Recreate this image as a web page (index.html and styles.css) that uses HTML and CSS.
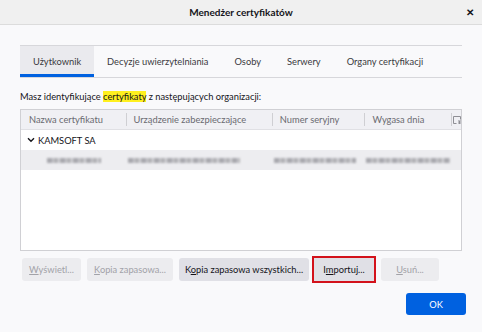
FILE: index.html
```html
<!DOCTYPE html>
<html lang="pl">
<head>
    <meta charset="UTF-8">
    <meta name="viewport" content="width=device-width, initial-scale=1.0">
    <link rel="stylesheet" href="styles.css">
</head>
<body>

    <div class="titlebar">
        <span></span>
        <span class="title">Menedżer certyfikatów</span>
        <span class="close">&#x2715;</span>
    </div>

    <div class="content">
        <div class="tabs">
            <div class="tab active">Użytkownik</div>
            <div class="tab">Decyzje uwierzytelniania</div>
            <div class="tab">Osoby</div>
            <div class="tab">Serwery</div>
            <div class="tab">Organy certyfikacji</div>
        </div>

        <p class="intro">Masz identyfikujące <mark>certyfikaty</mark> z następujących organizacji:</p>

        <div class="cert-table">
            <div class="cert-head">
                <div class="col c1">Nazwa certyfikatu</div>
                <div class="col c2">Urządzenie zabezpieczające</div>
                <div class="col c3">Numer seryjny</div>
                <div class="col c4">Wygasa dnia</div>
                <div class="col c5">
                    <svg width="8" height="8" viewBox="0 0 8 8"><path d="M0.5 0.5h7v3M0.5 0.5v7h3M5 5h3M5 7h3M6.5 5v3" fill="none" stroke="#8f8f95" stroke-width="1"/></svg>
                </div>
            </div>
            <div class="group-row">
                <svg width="8" height="6" viewBox="0 0 8 6"><path d="M1 1.2l3 3 3-3" fill="none" stroke="#15141a" stroke-width="1.4"/></svg>
                KAMSOFT SA
            </div>
            <div class="cert-row">
                <div class="col c1"><span class="blur" style="width:54px"></span></div>
                <div class="col c2"><span class="blur" style="width:112px"></span></div>
                <div class="col c3"><span class="blur" style="width:82px"></span></div>
                <div class="col c4"><span class="blur" style="width:84px"></span></div>
            </div>
        </div>

        <div class="actions">
            <button class="btn w-view" disabled><u>W</u>yświetl...</button>
            <button class="btn w-backup" disabled><u>K</u>opia zapasowa...</button>
            <button class="btn w-backup-all">K<u>o</u>pia zapasowa wszystkich...</button>
            <button class="btn w-import marked">I<u>m</u>portuj...</button>
            <button class="btn w-delete" disabled><u>U</u>suń...</button>
        </div>
    </div>

    <div class="footer">
        <button class="ok-btn">OK</button>
    </div>

</body>
</html>
```

FILE: styles.css
```css
body {
    font-family: 'Lato', sans-serif;
    font-size: 9.3px;
    color: #15141a;
    background-color: #f9f9fb;
    margin: 0;
    padding: 0;
    width: 482px;
    height: 332px;
    overflow: hidden;
    white-space: nowrap;
}

.titlebar {
    height: 24px;
    background-color: #f0f0f0;
    border-bottom: 1px solid #dcdcdc;
    display: grid;
    grid-template-columns: 1fr auto 1fr;
    align-items: center;
}

.title {
    font-weight: bold;
    font-size: 10px;
}

.close {
    justify-self: end;
    margin-right: 8px;
    font-size: 10px;
    font-weight: bold;
}

.content {
    padding: 20px 20px 0 20px;
}

.tabs {
    display: flex;
    border-top: 1px solid #d7d7db;
    border-bottom: 1px solid #d7d7db;
    height: 31px;
}

.tab {
    padding: 0 13px;
    display: flex;
    align-items: center;
    color: #3a3a40;
}

.tab.active {
    background-color: #eaeaee;
    box-shadow: inset 0 -3px 0 #0061e0;
}

.intro {
    margin: 12px 0 0 0;
    height: 14px;
    line-height: 14px;
}

.intro mark {
    background-color: #fff01f;
    color: #15141a;
}

.cert-table {
    margin-top: 5px;
    height: 140px;
    border: 1px solid #d0d0d4;
    background: white;
}

.cert-head {
    display: flex;
    height: 19px;
    background-color: #f0f0f4;
    border-bottom: 1px solid #e0e0e4;
    color: #6a6a70;
}

.col {
    display: flex;
    align-items: center;
    padding-left: 8px;
    box-sizing: border-box;
    position: relative;
}

.cert-head .col + .col::before {
    content: "";
    position: absolute;
    left: 0;
    top: 3px;
    bottom: 3px;
    border-left: 1px solid #cfcfd3;
}

.c1 { width: 105px; }
.c2 { width: 147px; }
.c3 { width: 93px; }
.c4 { width: 87px; }
.c5 { width: 10px; padding-left: 2px; }

.group-row {
    height: 20px;
    display: flex;
    align-items: center;
    gap: 3px;
    padding-left: 6px;
}

.cert-row {
    height: 20px;
    display: flex;
    background-color: #ededf0;
}

.cert-row .c1 { padding-left: 26px; }
.cert-row .c2 { padding-left: 2px; }
.cert-row .c3 { padding-left: 1px; }
.cert-row .c4 { padding-left: 0; }

.blur {
    display: block;
    height: 5px;
    background: repeating-linear-gradient(90deg, #a8a8ae 0 5px, #c4c4c8 5px 7px, #b2b2b6 7px 11px, #d4d4d8 11px 13px);
    filter: blur(0.8px);
}

.actions {
    display: flex;
    gap: 6px;
    margin-top: 7px;
    padding-left: 2px;
}

.btn {
    font-family: inherit;
    font-size: 9.3px;
    height: 23px;
    padding: 0;
    border: none;
    border-radius: 3px;
    background-color: #e0e0e6;
    color: #15141a;
    white-space: nowrap;
}

.btn:disabled {
    background-color: #ececef;
    color: #a2a2a8;
}

.w-view { width: 59px; }
.w-backup { width: 86px; }
.w-backup-all { width: 130px; }
.w-import { width: 60px; margin-left: -1px; }
.w-delete { width: 58px; margin-left: 1px; }

.btn.marked {
    border-radius: 0;
    outline: 2px solid #d3121b;
}

.footer {
    display: flex;
    justify-content: flex-end;
    padding: 12px 16px 0 0;
}

.ok-btn {
    font-family: inherit;
    font-size: 9.3px;
    width: 60px;
    height: 22px;
    border: none;
    border-radius: 3px;
    background-color: #0061e0;
    color: white;
}
```
